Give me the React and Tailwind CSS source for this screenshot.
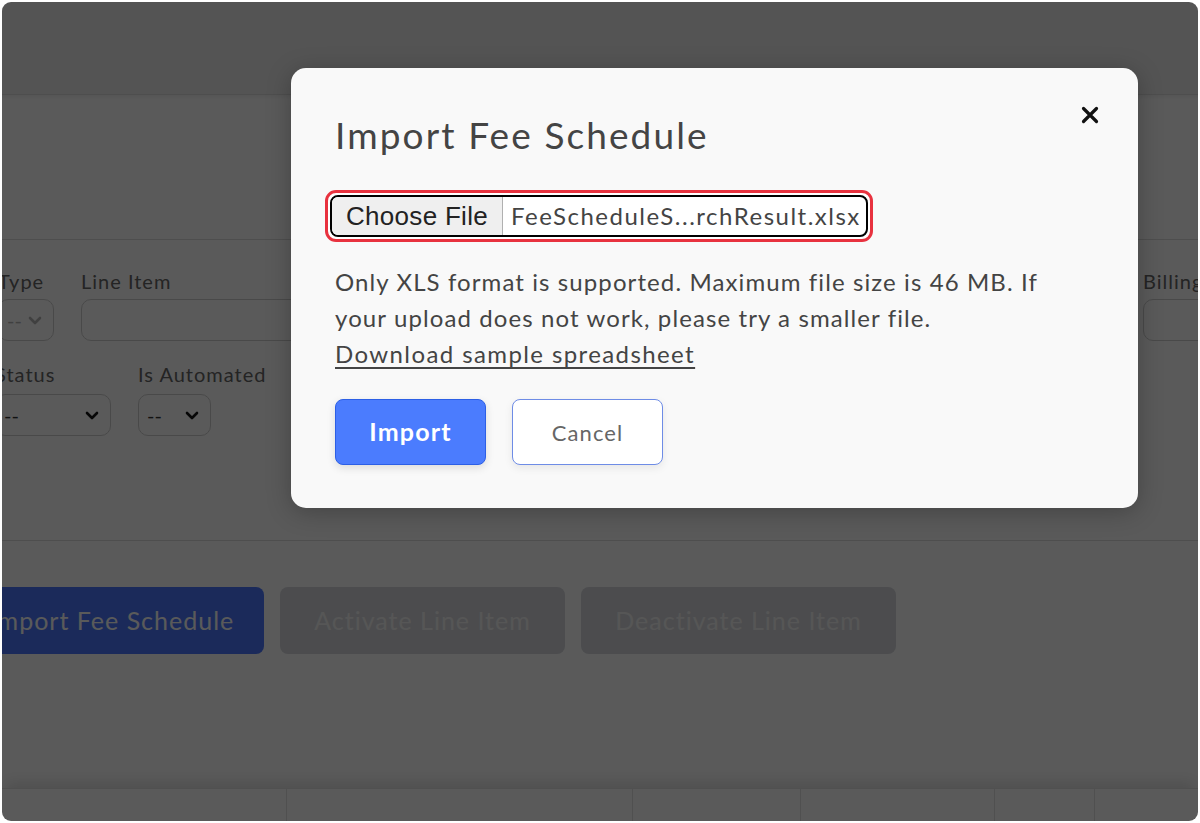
import React from "react";

const Chevron = ({ className }) => (
  <svg viewBox="0 0 16 16" className={className} fill="none" stroke="currentColor" strokeWidth="2.6" strokeLinecap="round" strokeLinejoin="round">
    <path d="M3 6l5 5 5-5" />
  </svg>
);

const Select = ({ width, muted }) => (
  <div
    className={`flex h-[42px] items-center justify-between rounded-[10px] border border-[#cfcfcf] bg-white pl-[8px] pr-[10px] text-[20px] ${width} ${
      muted ? "text-[#b5b5b5]" : "text-[#333]"
    }`}
  >
    <span>--</span>
    <Chevron className={`h-[16px] w-[16px] ${muted ? "text-[#b5b5b5]" : "text-[#111]"}`} />
  </div>
);

const Field = ({ label, children, className = "" }) => (
  <div className={`flex flex-col ${className}`}>
    <span className="h-[24px] whitespace-nowrap text-[20px] leading-[24px] tracking-[1px] text-[#666]">{label}</span>
    {children}
  </div>
);

const App = () => {
  return (
    <div className="h-[823px] w-[1200px] bg-white p-[2px]" style={{ fontFamily: "Lato, 'Open Sans', sans-serif" }}>
      <div className="relative flex h-[819px] flex-col overflow-hidden rounded-[9px] bg-white">
        {/* page behind the dialog */}
        <div className="h-[93px] shrink-0 border-b border-[#dcdcdc] bg-[#eeeeee]" />
        <div className="h-[145px] shrink-0 border-b border-[#dedede] shadow-[inset_0_4px_4px_-3px_rgba(0,0,0,0.08)]" />

        <div className="-ml-[4px] flex h-[301px] shrink-0 flex-col gap-[21px] border-b border-[#dedede] pt-[29px]">
          <div className="flex gap-[27px]">
            <Field label="Type" className="w-[56px] shrink-0">
              <div className="mt-[6px]">
                <Select width="w-[56px]" muted />
              </div>
            </Field>
            <Field label="Line Item" className="w-[1035px] shrink-0">
              <div className="mt-[6px] h-[42px] rounded-[10px] border border-[#cfcfcf] bg-white" />
            </Field>
            <Field label="Billing" className="w-[200px] shrink-0">
              <div className="mt-[6px] h-[42px] rounded-[10px] border border-[#cfcfcf] bg-white" />
            </Field>
          </div>
          <div className="flex gap-[27px]">
            <Field label="Status" className="-ml-[3px] w-[116px] shrink-0">
              <div className="mt-[8px]">
                <Select width="w-[116px]" />
              </div>
            </Field>
            <Field label="Is Automated" className="w-[140px] shrink-0">
              <div className="mt-[8px]">
                <Select width="w-[73px]" />
              </div>
            </Field>
          </div>
        </div>

        <div className="-ml-[42px] mt-[46px] flex shrink-0 gap-[16px] text-[25px] tracking-[1px]">
          <div className="flex h-[67px] w-[304px] items-center justify-center rounded-[8px] bg-[#4c78ff] text-white">
            Import Fee Schedule
          </div>
          <div className="flex h-[67px] w-[285px] items-center justify-center rounded-[8px] bg-[#d6d8dd] text-[#f4f4f4]">
            Activate Line Item
          </div>
          <div className="flex h-[67px] w-[315px] items-center justify-center rounded-[8px] bg-[#d6d8dd] text-[#f4f4f4]">
            Deactivate Line Item
          </div>
        </div>

        <div className="mt-auto flex h-[33px] shrink-0 border-t border-[#e2e2e2] shadow-[0_-10px_14px_-4px_rgba(0,0,0,0.12)]">
          <div className="w-[285px] border-r border-[#e2e2e2]" />
          <div className="w-[346px] border-r border-[#e2e2e2]" />
          <div className="w-[168px] border-r border-[#e2e2e2]" />
          <div className="w-[194px] border-r border-[#e2e2e2]" />
          <div className="w-[100px] border-r border-[#e2e2e2]" />
          <div className="flex-1" />
        </div>

        {/* overlay */}
        <div className="absolute inset-0 bg-black/[0.646]" />

        {/* dialog */}
        <div className="absolute left-[289px] top-[66px] w-[847px] rounded-[15px] bg-[#f9f9f9] px-[44px] pb-[43px] pt-[45px] shadow-[0_4px_24px_rgba(0,0,0,0.25)]">
          <button className="absolute right-[38px] top-[37px] text-[#111]">
            <svg viewBox="0 0 20 20" className="h-[20px] w-[20px]" fill="none" stroke="currentColor" strokeWidth="3.2" strokeLinecap="round">
              <path d="M3.5 3.5l13 13M16.5 3.5l-13 13" />
            </svg>
          </button>

          <h2 className="h-[44px] text-[37px] leading-[44px] tracking-[2.1px] text-[#444]">Import Fee Schedule</h2>

          <div className="-ml-[10px] mt-[33px] inline-flex rounded-[11px] border-[3px] border-[#e8323f] bg-white p-[2px]">
            <div className="flex h-[42px] items-stretch overflow-hidden rounded-[8px] border-2 border-black bg-white">
              <div
                className="flex items-center border-r border-[#b0b0b0] bg-[#efefef] px-[14px] text-[26px] tracking-[0.3px] text-[#222]"
                style={{ fontFamily: "'Liberation Sans', Arial, sans-serif" }}
              >
                Choose File
              </div>
              <div className="flex items-center pl-[8px] pr-[5px] text-[24px] tracking-[1.5px] text-[#444]">FeeScheduleS...rchResult.xlsx</div>
            </div>
          </div>

          <p className="mt-[22px] whitespace-nowrap text-[24px] leading-[36px] tracking-[1.1px] text-[#444]">
            Only XLS format is supported. Maximum file size is 46 MB. If
            <br />
            your upload does not work, please try a smaller file.
            <br />
            <a className="tracking-[1.4px] underline underline-offset-[4px]">Download sample spreadsheet</a>
          </p>

          <div className="mt-[27px] flex gap-[26px]">
            <button className="h-[66px] w-[151px] rounded-[8px] border border-[#2c5fe6] bg-[#4b7cfe] text-[25px] font-bold tracking-[1.2px] text-white shadow-[0_3px_8px_rgba(0,0,0,0.12)]">
              Import
            </button>
            <button className="h-[66px] w-[151px] rounded-[8px] border border-[#6e8ce6] bg-white text-[22px] tracking-[1.1px] text-[#666] shadow-[0_3px_8px_rgba(0,0,0,0.08)]">
              Cancel
            </button>
          </div>
        </div>
      </div>
    </div>
  );
};

export default App;
